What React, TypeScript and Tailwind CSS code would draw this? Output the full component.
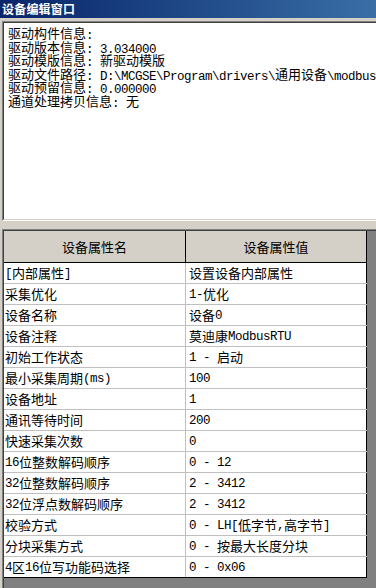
import React from 'react';

// SimSun-like run: CJK at 13px, half-width latin at 7px advance
const Txt: React.FC<{ s: string }> = ({ s }) => {
  const parts = s.split(/([\x20-\x7e]+)/).filter((p) => p.length > 0);
  return (
    <>
      {parts.map((p, i) =>
        /^[\x20-\x7e]+$/.test(p) ? (
          <span
            key={i}
            className="relative top-[1px] font-['Liberation_Mono',monospace] text-[12.5px] tracking-[-0.5px] leading-[0]"
          >
            {p}
          </span>
        ) : (
          <span key={i}>{p}</span>
        )
      )}
    </>
  );
};

const infoLines = [
  '驱动构件信息: ',
  '驱动版本信息: 3.034000',
  '驱动模版信息: 新驱动模版',
  '驱动文件路径: D:\\MCGSE\\Program\\drivers\\通用设备\\modbus',
  '驱动预留信息: 0.000000',
  '通道处理拷贝信息: 无',
];

const rows: [string, string][] = [
  ['[内部属性]', '设置设备内部属性'],
  ['采集优化', '1-优化'],
  ['设备名称', '设备0'],
  ['设备注释', '莫迪康ModbusRTU'],
  ['初始工作状态', '1 - 启动'],
  ['最小采集周期(ms)', '100'],
  ['设备地址', '1'],
  ['通讯等待时间', '200'],
  ['快速采集次数', '0'],
  ['16位整数解码顺序', '0 - 12'],
  ['32位整数解码顺序', '2 - 3412'],
  ['32位浮点数解码顺序', '2 - 3412'],
  ['校验方式', '0 - LH[低字节,高字节]'],
  ['分块采集方式', '0 - 按最大长度分块'],
  ['4区16位写功能码选择', '0 - 0x06'],
];

const App: React.FC = () => {
  return (
    <div className="w-[376px] h-[588px] overflow-hidden bg-[#d4d0c8] flex flex-col font-['Noto_Sans_CJK_SC',sans-serif] text-[13px] text-black">
      {/* Title bar */}
      <div className="h-[18px] shrink-0 bg-gradient-to-r from-[#0a246a] to-[#3a6ea5] flex items-center pl-[2px]">
        <span className="text-white font-bold text-[12px] leading-[18px] tracking-[0.2px]">设备编辑窗口</span>
      </div>

      {/* Info text box */}
      <div className="mt-[3px] ml-[2px] w-[380px] h-[200px] shrink-0 border-t border-l border-b border-[#808080] border-b-white">
        <div className="h-full border-t border-l border-b border-[#404040] border-b-[#d4d0c8] bg-white pt-[3px] pl-[4px] leading-[13.5px] whitespace-pre overflow-hidden">
          {infoLines.map((l, i) => (
            <div key={i}>
              <Txt s={l} />
            </div>
          ))}
        </div>
      </div>

      {/* Property grid */}
      <div className="mt-[8px] ml-[2px] flex-1 border-t border-l border-[#808080]">
        <div className="h-full border-t border-l border-[#404040] bg-[#808080]">
          <div className="w-[363px] bg-white">
            <div className="flex h-[32px] bg-[#d4d0c8] border-b border-black">
              <div className="w-[182px] border-r border-black flex items-center justify-center">
                <Txt s="设备属性名" />
              </div>
              <div className="w-[181px] border-r border-black flex items-center justify-center">
                <Txt s="设备属性值" />
              </div>
            </div>
            {rows.map(([k, v], i) => (
              <div
                key={k}
                className={`flex h-[21px] border-b whitespace-pre ${i === rows.length - 1 ? 'border-black' : 'border-[#c0c0c0]'}`}
              >
                <div className="w-[182px] border-r border-[#c0c0c0] pl-[1px] flex items-center leading-[20px]">
                  <Txt s={k} />
                </div>
                <div className="w-[181px] border-r border-black pl-[3px] flex items-center leading-[20px]">
                  <Txt s={v} />
                </div>
              </div>
            ))}
          </div>
        </div>
      </div>
    </div>
  );
};

export default App;
